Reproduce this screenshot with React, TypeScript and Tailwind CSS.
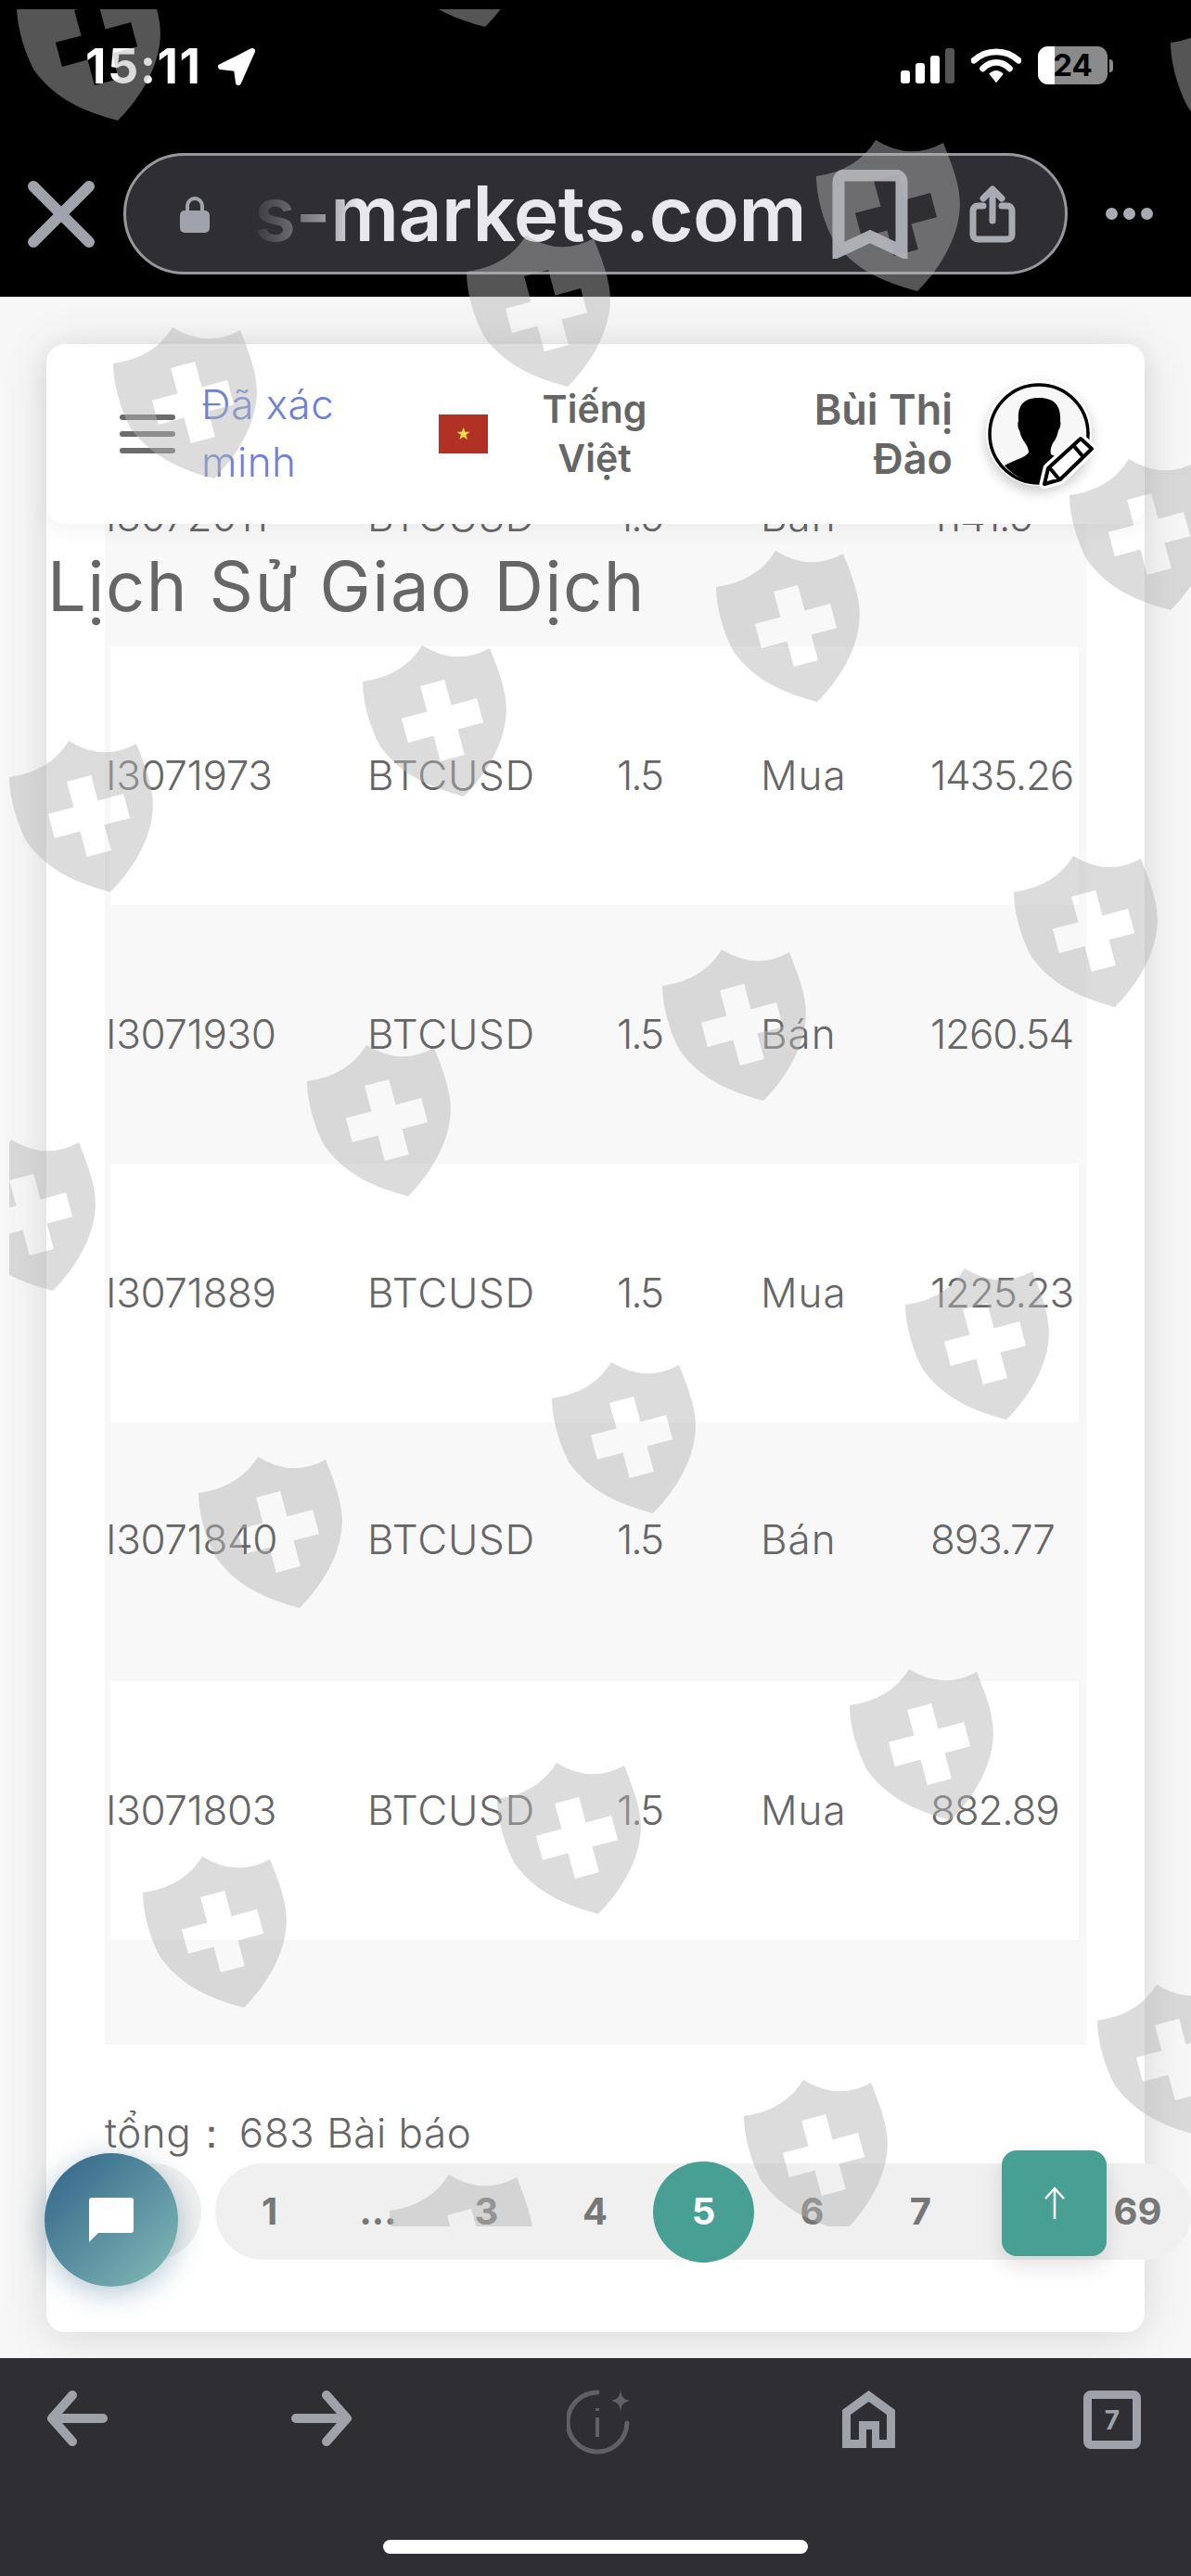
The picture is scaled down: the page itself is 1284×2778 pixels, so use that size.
const FONT = 'font-["Inter","Noto_Sans",sans-serif]'

// shield centres in page pixels
const SHIELDS = [
  [104, 48], [500, -53], [966, 232], [589, 335], [208, 434], [1239, 576], [858, 675], [477, 777], [96, 880],
  [1179, 1004], [800, 1105], [417, 1208], [34, 1310], [1062, 1449], [681, 1550], [300, 1652], [1002, 1881],
  [622, 1982], [240, 2083], [1269, 2221], [888, 2324], [506, 2426], [1348, 88],
]

const SHIELD_PATH =
  'M-86-42Q-42-48-22-81Q15-58 51-78C62-50 72-25 68 0C64 30 45 60 23 82C-15 72-45 58-67 28C-78 8-86-20-86-42Z' +
  'M-23.9-37.1 2.2-44.1 9.5-16.5 37.1-23.9 44.1 2.2 16.5 9.5 23.9 37.1-2.2 44.1-9.5 16.5-37.1 23.9-44.1-2.2-16.5-9.5Z'

const ROWS = [
  ['I3072011', 'BTCUSD', '1.5', 'Bán', '1141.5'],
  ['I3071973', 'BTCUSD', '1.5', 'Mua', '1435.26'],
  ['I3071930', 'BTCUSD', '1.5', 'Bán', '1260.54'],
  ['I3071889', 'BTCUSD', '1.5', 'Mua', '1225.23'],
  ['I3071840', 'BTCUSD', '1.5', 'Bán', '893.77'],
  ['I3071803', 'BTCUSD', '1.5', 'Mua', '882.89'],
]

const CELL_TRACKING = [
  'tracking-[-0.4px]',
  'tracking-[0.7px]',
  'tracking-[-2px]',
  'tracking-[1px]',
  'tracking-[-1.2px]',
]

const PAGES = ['1', '...', '3', '4', '5', '6', '7', '...', '69']

function Watermarks() {
  return (
    <svg
      aria-hidden="true"
      viewBox="10 10 1274 2391"
      className="absolute left-[10px] top-[10px] z-50 w-[1274px] h-[2391px] pointer-events-none"
    >
      {SHIELDS.map(([x, y], i) => (
        <path
          key={i}
          transform={`translate(${x} ${y})`}
          fill="#b5b5b5"
          fillOpacity="0.47"
          fillRule="evenodd"
          d={SHIELD_PATH}
        />
      ))}
    </svg>
  )
}

function StatusBar() {
  return (
    <div className="h-[165px] pt-[50px] pl-[92px] pr-[84px] flex items-start justify-between">
      <div className="flex items-center gap-[17px]">
        <span className="text-white text-[52px] leading-[44px] font-bold tracking-[1.5px]">15:11</span>
        <svg width="42" height="42" viewBox="0 0 42 42">
          <path d="M38 4 4 21 21 23 23 38Z" fill="#fff" stroke="#fff" strokeWidth="6" strokeLinejoin="round" />
        </svg>
      </div>
      <div className="flex items-center gap-[18px]">
        <svg width="58" height="38" viewBox="0 0 58 38">
          <rect x="0" y="24" width="10" height="14" rx="3" fill="#fff" />
          <rect x="16" y="16" width="10" height="22" rx="3" fill="#fff" />
          <rect x="32" y="8" width="10" height="30" rx="3" fill="#fff" />
          <rect x="48" y="0" width="10" height="38" rx="3" fill="#555" />
        </svg>
        <svg width="54" height="38" viewBox="0 0 56 38">
          <path d="M3 13C17 0 39 0 53 13" fill="none" stroke="#fff" strokeWidth="7" strokeLinecap="round" />
          <path d="M13 22C22 13 34 13 43 22" fill="none" stroke="#fff" strokeWidth="7" strokeLinecap="round" />
          <path d="M20 28c5-5 11-5 16 0l-8 10Z" fill="#fff" />
        </svg>
        <div className="flex items-center gap-[2px]">
          <div className="relative w-[75px] h-[41px] rounded-[11px] overflow-hidden bg-[#8b8b8b] flex items-center justify-center">
            <div className="absolute left-0 top-0 bottom-0 w-[18px] bg-white" />
            <span className="relative text-black text-[33px] font-bold leading-none">24</span>
          </div>
          <div className="w-[4px] h-[14px] rounded-r-full bg-[#8b8b8b]" />
        </div>
      </div>
    </div>
  )
}

function UrlBar() {
  return (
    <div className="flex items-center pl-[30px]">
      <svg width="72" height="72" viewBox="0 0 72 72" className="mr-[31px]">
        <path d="M6 6 66 66M66 6 6 66" stroke="#a0a3ab" strokeWidth="12" strokeLinecap="round" />
      </svg>
      <div className="w-[1018px] h-[131px] rounded-[66px] border-[3px] border-[#98989c] bg-[#2e2e33] flex items-center pl-[58px]">
        <svg width="32" height="40" viewBox="0 0 32 40" className="mr-[48px]">
          <path d="M8 18v-7a8 8 0 0 1 16 0v7" fill="none" stroke="#a0a3ab" strokeWidth="4" />
          <rect x="0" y="16" width="32" height="24" rx="5" fill="#a0a3ab" />
        </svg>
        <span className="w-[590px] text-[82px] leading-[100px] font-semibold tracking-[-0.5px] whitespace-nowrap bg-linear-to-r from-[#3a3a3e] via-[#8e8e94] via-[12%] to-[#e8e8ee] to-[19%] bg-clip-text text-transparent">
          s-markets.com
        </span>
        <svg width="82" height="96" viewBox="0 0 82 96" className="ml-[33px]">
          <path d="M7 88V13a7 7 0 0 1 7-7h54a7 7 0 0 1 7 7v75L41 72Z" fill="none" stroke="#a9abb2" strokeWidth="13" />
        </svg>
        <svg width="50" height="62" viewBox="0 0 50 62" className="ml-[66px]">
          <path d="M15 22H9a5 5 0 0 0-5 5v26a5 5 0 0 0 5 5h32a5 5 0 0 0 5-5V27a5 5 0 0 0-5-5h-6" fill="none" stroke="#a9abb2" strokeWidth="7" strokeLinecap="round" />
          <path d="M25 38V5M15 14 25 4l10 10" fill="none" stroke="#a9abb2" strokeWidth="7" strokeLinecap="round" strokeLinejoin="round" />
        </svg>
      </div>
      <div className="ml-[41px] flex gap-[6px]">
        <div className="w-[13px] h-[13px] rounded-full bg-[#a9abb2]" />
        <div className="w-[13px] h-[13px] rounded-full bg-[#a9abb2]" />
        <div className="w-[13px] h-[13px] rounded-full bg-[#a9abb2]" />
      </div>
    </div>
  )
}

function Avatar() {
  return (
    <div className="w-[114px] h-[114px] rounded-full bg-white shadow-[0_6px_14px_rgba(0,0,0,0.22)]">
      <svg width="118" height="118" viewBox="0 0 118 118" className="overflow-visible">
        <circle cx="57" cy="58" r="53" fill="#f7f7f7" stroke="#000" strokeWidth="3.5" />
        <path
          d="M20 92C30 86 42 84 46 78 46 74 44 70 41 66 38 62 37 58 36 54 34 52 34 46 35 44 34 30 38 19 57 19 76 19 81 30 80 44 81 47 80 52 78 54 77 60 75 64 72 68 70 72 69 76 70 80L84 86 70 110A53 53 0 0 1 20 92Z"
          fill="#000"
        />
        <path d="M63 112 67 95 102 63 114 74 80 107Z" fill="#fff" stroke="#fff" strokeWidth="11" strokeLinejoin="round" />
        <path
          d="M63 112 67 95 102 63 114 74 80 107ZM69 95 79 107M94 70 105 83"
          fill="#fff"
          stroke="#000"
          strokeWidth="4"
          strokeLinejoin="round"
        />
      </svg>
    </div>
  )
}

function HeaderCard() {
  return (
    <div className="absolute left-[50px] top-[51px] z-20 w-[1184px] h-[194px] rounded-[20px] bg-white shadow-[0_6px_24px_rgba(0,0,0,0.05)] flex items-start pl-[79px] pt-[34px]">
      <div className="mt-[42px] w-[60px] flex flex-col gap-[12px]">
        <div className="h-[6px] rounded-full bg-[#6b6b6b]" />
        <div className="h-[6px] rounded-full bg-[#6b6b6b]" />
        <div className="h-[6px] rounded-full bg-[#6b6b6b]" />
      </div>
      <div className="ml-[28px] w-[170px] text-[#6f80d6] text-[44px] leading-[62px] font-light tracking-[0.5px]">Đã xác minh</div>
      <div className="ml-[86px] mt-[42px] w-[53px] h-[42px] bg-[#b13224] flex items-center justify-center">
        <span className="text-[#f2dc4e] text-[16px] leading-none">★</span>
      </div>
      <div className="ml-[27px] w-[176px] mt-[10px] text-center text-[#666] text-[41px] leading-[53px] font-semibold">Tiếng Việt</div>
      <div className="ml-[58px] w-[240px] mt-[10px] text-right text-[#666] text-[45px] leading-[53px] font-semibold">Bùi Thị Đào</div>
      <div className="ml-[36px] mt-[5px]">
        <Avatar />
      </div>
    </div>
  )
}

function TableRow({ row, i }: { row: string[]; i: number }) {
  const white = i % 2 === 1
  return (
    <div
      className={
        white
          ? 'h-[279px] ml-[6px] mr-[8px] bg-white grid grid-cols-[277px_269px_155px_183px_1fr] items-center'
          : 'h-[279px] pl-[4px] grid grid-cols-[279px_269px_155px_183px_1fr] items-center'
      }
    >
      {row.map((cell, c) => (
        <div
          key={c}
          className={
            (c === 0 ? (white ? '-ml-[5px] ' : '-ml-[3px] ') : '') +
            (i === 4 ? 'pb-[28px] ' : 'pb-[2px] ') +
            CELL_TRACKING[c] +
            ' text-[#666] text-[44px] leading-[52px] font-light whitespace-nowrap'
          }
        >
          {cell}
        </div>
      ))}
    </div>
  )
}

function Pagination() {
  return (
    <div className="mt-[8px] flex items-center">
      <div className="w-[104px] h-[104px] rounded-full bg-[#f0f0f0] shrink-0" />
      <div className="ml-[15px] h-[104px] rounded-full bg-[#f0f0f0] flex items-center shrink-0">
        {PAGES.map((p, i) => (
          <div key={i} className="w-[117px] flex justify-center">
            <div
              className={
                p === '5'
                  ? 'w-[109px] h-[109px] rounded-full bg-[#48a095] text-white text-[40px] font-bold flex items-center justify-center'
                  : 'h-[109px] text-[#777] text-[40px] font-bold flex items-center justify-center'
              }
            >
              {p}
            </div>
          </div>
        ))}
      </div>
    </div>
  )
}

function BottomBar() {
  return (
    <div className="h-[235px] bg-[#2e2e33] flex flex-col items-center">
      <div className="w-full h-[196px] pl-[50px] pt-[35px] flex items-start">
        <svg width="66" height="60" viewBox="0 0 66 60">
          <path d="M61 30H8M28 5 6 30l22 25" fill="none" stroke="#9fa2a9" strokeWidth="10" strokeLinecap="round" strokeLinejoin="round" />
        </svg>
        <svg width="66" height="60" viewBox="0 0 66 60" className="ml-[198px]">
          <path d="M5 30H58M38 5l22 25-22 25" fill="none" stroke="#9fa2a9" strokeWidth="10" strokeLinecap="round" strokeLinejoin="round" />
        </svg>
        <svg width="70" height="72" viewBox="0 0 70 72" className="ml-[231px] -mt-[3px]">
          <path d="M33 5A32 32 0 1 0 65 38" fill="none" stroke="#5f6167" strokeWidth="5" strokeLinecap="round" />
          <path d="M33 22v3M33 32v21" stroke="#5f6167" strokeWidth="4" />
          <path d="M58 2c1 8 3 10 10 12-7 2-9 4-10 12-1-8-3-10-10-12 7-2 9-4 10-12Z" fill="#5f6167" />
        </svg>
        <svg width="57" height="62" viewBox="0 0 57 62" className="ml-[227px]">
          <path
            fill="#9fa2a9"
            fillRule="evenodd"
            d="M0 62V21L28.5 0 57 21V62H32V42H26V62ZM9 53V26L28.5 12 48 26V53H40V33H18V53Z"
          />
        </svg>
        <div className="ml-[203px] w-[62px] h-[63px] rounded-[8px] border-[9px] border-[#9fa2a9] flex items-center justify-center text-[#9fa2a9] text-[28px] font-bold leading-none">
          7
        </div>
      </div>
      <div className="w-[458px] h-[15px] rounded-full bg-white" />
    </div>
  )
}

export default function App() {
  return (
    <div className={`relative w-[1284px] h-[2778px] overflow-hidden bg-[#f7f7f7] ${FONT}`}>
      <Watermarks />

      <div className="h-[320px] bg-black">
        <StatusBar />
        <UrlBar />
      </div>

      <div className="relative h-[2223px] overflow-hidden px-[50px] pt-[51px]">
        <HeaderCard />

        {/* Sticky title lying over the table */}
        <h1 className="absolute left-[51px] top-[266px] z-10 text-[#666] text-[74px] leading-[92px] font-normal tracking-[1.6px] whitespace-nowrap">
          Lịch Sử Giao Dịch
        </h1>

        <div className="h-[2144px] rounded-[20px] bg-white shadow-[0_4px_50px_rgba(0,0,0,0.13)] pt-[47px] pl-[63px] pr-[63px]">
          <div className="bg-[#f8f8f8] h-[1787px]">
            {ROWS.map((row, i) => (
              <TableRow key={i} row={row} i={i} />
            ))}
          </div>
          <div className="mt-[70px] text-[#666] text-[44px] leading-[50px] font-light tracking-[0.5px] whitespace-nowrap">
            tổng：<span className="ml-[7px]">683 Bài báo</span>
          </div>
          <Pagination />
        </div>

        {/* Floating buttons */}
        <div className="absolute left-[48px] top-[2002px] z-30 w-[144px] h-[144px] rounded-full bg-linear-to-br from-[#2f6286] to-[#85bdb8] shadow-[0_6px_30px_rgba(47,98,134,0.38)] flex items-center justify-center">
          <svg width="48" height="48" viewBox="0 0 48 48">
            <path d="M3 0h42a3 3 0 0 1 3 3v32a3 3 0 0 1-3 3H10L0 48V3a3 3 0 0 1 3-3Z" fill="#fff" />
          </svg>
        </div>
        <div className="absolute left-[1080px] top-[1999px] z-30 w-[113px] h-[114px] rounded-[16px] bg-[#48a095] shadow-[0_10px_24px_rgba(0,0,0,0.12)] flex items-center justify-center">
          <svg width="26" height="36" viewBox="0 0 26 36">
            <path d="M13 35V2M3 13 13 2l10 11" fill="none" stroke="#fff" strokeWidth="2.5" />
          </svg>
        </div>
      </div>

      <BottomBar />
    </div>
  )
}
